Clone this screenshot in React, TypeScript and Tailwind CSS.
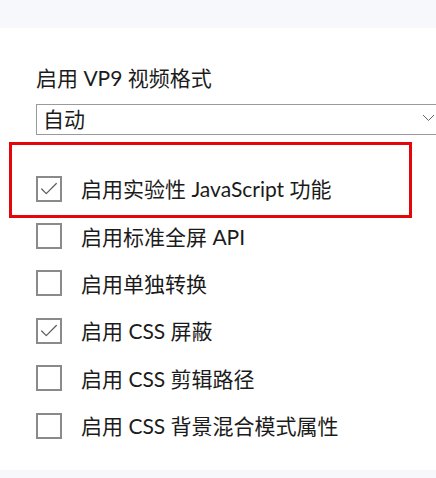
import { Check } from "lucide-react"

const options = [
  { label: "启用实验性 JavaScript 功能", checked: true },
  { label: "启用标准全屏 API", checked: false },
  { label: "启用单独转换", checked: false },
  { label: "启用 CSS 屏蔽", checked: true },
  { label: "启用 CSS 剪辑路径", checked: false },
  { label: "启用 CSS 背景混合模式属性", checked: false },
]

export default function App() {
  return (
    <div
      className="relative h-[478px] w-[436px] overflow-hidden bg-white text-[#1b1b1b]"
      style={{ fontFamily: 'Lato, "Noto Sans CJK SC", sans-serif' }}
    >
      {/* 상단 바 */}
      <div className="h-[28px] bg-[#f7f8fc]" />

      <div className="pl-[36px]">
        <div className="mt-[36px] h-[28px] text-[21px] leading-[28px]">启用 VP9 视频格式</div>

        {/* 셀렉트 */}
        <div className="mt-[12px] flex h-[31px] w-[412px] items-center justify-between border border-[#9a9a9a] pb-[3px] pl-[6px] pr-[12px]">
          <span className="text-[21px] leading-none">自动</span>
          <svg width="13" height="8" viewBox="0 0 13 8" className="text-[#666]">
            <path d="M1 1l5.5 5.5L12 1" fill="none" stroke="currentColor" strokeWidth="1" />
          </svg>
        </div>

        {/* 체크박스 목록 */}
        <div className="mt-[30px] flex flex-col">
          {options.map((o) => (
            <div key={o.label} className="flex h-[47.4px] items-center gap-[19px]">
              <div className="flex h-[26px] w-[26px] shrink-0 items-center justify-center border-2 border-[#8a8a8a]">
                {o.checked && <Check className="h-[22px] w-[22px] text-[#5a5a5a]" strokeWidth={1.3} />}
              </div>
              <span className="text-[21px] leading-none">{o.label}</span>
            </div>
          ))}
        </div>
      </div>

      {/* 빨간 강조 박스 */}
      <div className="absolute left-[9px] top-[142px] h-[76px] w-[403px] border-[3px] border-[#e3060b]" />

      {/* 하단 바 */}
      <div className="absolute inset-x-0 bottom-0 h-[8px] bg-[#f7f8fc]" />
    </div>
  )
}
